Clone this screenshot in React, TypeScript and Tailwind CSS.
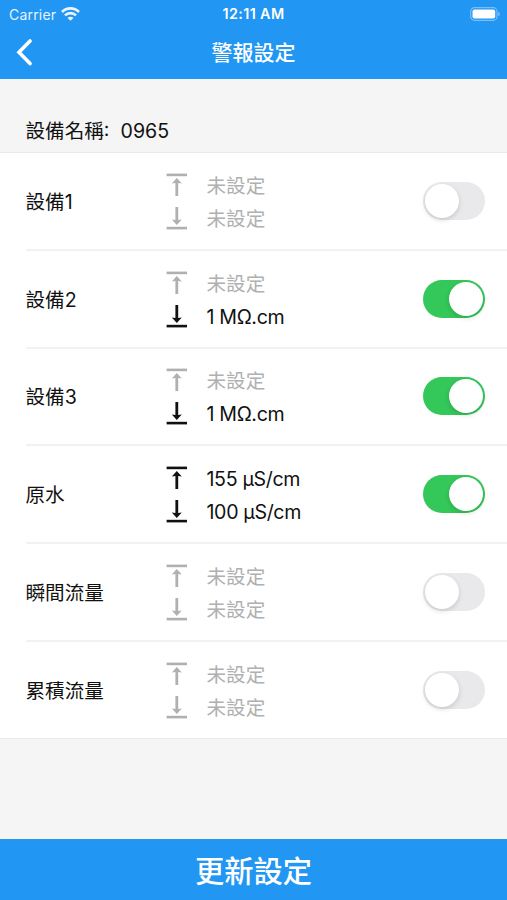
import React, { useState } from 'react';

type Channel = {
  name: string;
  high?: string;
  low?: string;
  enabled: boolean;
};

const initialChannels: Channel[] = [
  { name: '設備1', enabled: false },
  { name: '設備2', low: '1 MΩ.cm', enabled: true },
  { name: '設備3', low: '1 MΩ.cm', enabled: true },
  { name: '原水', high: '155 μS/cm', low: '100 μS/cm', enabled: true },
  { name: '瞬間流量', enabled: false },
  { name: '累積流量', enabled: false }
];

function LimitIcon({ low = false }: { low?: boolean }) {
  return (
    <svg viewBox="0 0 21 24" className="w-[21px] h-6 shrink-0" fill="currentColor">
      <g transform={low ? 'translate(0 24) scale(1 -1)' : undefined}>
        <rect x="0.6" y="0.6" width="20.4" height="2.6" />
        <path d="M10.8 5 L15.8 10.4 L12.2 9.9 V23 H9.4 V9.9 L5.8 10.4 Z" />
      </g>
    </svg>
  );
}

function Limit({ value, low = false }: { value?: string; low?: boolean }) {
  return (
    <div className={`flex h-[28.5px] gap-[19.5px] ${low ? 'items-end' : 'items-start'} ${value ? 'text-[#111111]' : 'text-[#b0b0b0]'}`}>
      <LimitIcon low={low} />
      <span className={`translate-y-px text-[19.6px] leading-[24px] whitespace-pre ${value ? 'tracking-[-0.35px]' : ''}`}>
        {value ?? '未設定'}
      </span>
    </div>
  );
}

function Toggle({ checked, onChange }: { checked: boolean; onChange: () => void }) {
  return (
    <button
      role="switch"
      aria-checked={checked}
      onClick={onChange}
      className={`flex w-[62.5px] h-[38px] items-center rounded-full p-[2px] ${checked ? 'justify-end bg-[#34c759]' : 'justify-start bg-[#e9e9eb]'}`}
    >
      <span className="w-[34px] h-[34px] rounded-full bg-white shadow-[0_2px_5px_rgba(0,0,0,0.15)]" />
    </button>
  );
}

function App() {
  const [channels, setChannels] = useState(initialChannels);

  const toggleChannel = (index: number) => {
    setChannels(prev => prev.map((c, i) => (i === index ? { ...c, enabled: !c.enabled } : c)));
  };

  return (
    <div className="flex h-[900px] w-[507px] flex-col overflow-hidden bg-[#f5f5f5] text-[#111111] font-['Inter','Noto_Sans_CJK_TC',sans-serif]">
      <header className="h-[79px] shrink-0 bg-[#2196f3] text-white">
        <div className="grid h-[27px] grid-cols-3 items-center pl-[9px] pr-[6px] text-[13.5px]">
          <div className="flex items-center gap-[5px] opacity-90">
            <span className="pt-px text-[14px] tracking-[0.2px]">Carrier</span>
            <svg viewBox="0 0 19 14" className="w-[19px] h-[14px]" fill="none" stroke="currentColor" strokeWidth="2.6">
              <path d="M1 5 C5.7 0.2 13.3 0.2 18 5" />
              <path d="M4 8.4 C7 5.3 12 5.3 15 8.4" />
              <path d="M9.5 13.8 L6.5 10.9 C8.2 9.5 10.8 9.5 12.5 10.9 Z" fill="currentColor" stroke="none" />
            </svg>
          </div>
          <span className="-ml-[3px] text-center font-semibold whitespace-nowrap pt-px text-[14.3px] tracking-[0.4px]">12:11 AM</span>
          <svg viewBox="0 0 31 14" className="ml-auto w-[31px] h-[14px]" fill="none">
            <rect x="0.7" y="0.7" width="26.3" height="12.6" rx="3.8" stroke="white" strokeOpacity="0.4" strokeWidth="1.2" />
            <rect x="2.5" y="2.5" width="22.7" height="9" rx="2" fill="white" />
            <path d="M28.4 4.8 C30.2 5.6 30.2 8.4 28.4 9.2 Z" fill="white" fillOpacity="0.5" />
          </svg>
        </div>
        <div className="grid h-[50px] grid-cols-3 items-center">
          <button aria-label="返回" className="pl-[16px]">
            <svg viewBox="0 0 18 28" className="w-[18px] h-7" fill="none" stroke="currentColor" strokeWidth="3.6" strokeLinecap="round">
              <path d="M14 3 L3 14.3 L14 25.6" />
            </svg>
          </button>
          <h1 className="text-center text-[21px] font-medium leading-none">警報設定</h1>
        </div>
      </header>

      <div className="flex h-[73px] shrink-0 items-end px-[25.5px] pb-[7px]">
        <p className="text-[19.6px] leading-[28px] whitespace-pre">設備名稱:  0965</p>
      </div>

      <main className="shrink-0 border-y border-[#ebebeb] bg-white">
        {channels.map((channel, index) => (
          <div key={channel.name} className="pl-[26px]">
            <div className={`flex items-center pr-[22px] ${index < channels.length - 1 ? 'h-[97.8px] border-b-2 border-[#f2f2f2]' : 'h-[96.5px]'}`}>
              <span className="-ml-[0.5px] w-[140.5px] pt-[3px] text-[19.6px]">{channel.name}</span>
              <div className="flex-1 pt-px">
                <Limit value={channel.high} />
                <Limit value={channel.low} low />
              </div>
              <Toggle checked={channel.enabled} onChange={() => toggleChannel(index)} />
            </div>
          </div>
        ))}
      </main>

      <button className="mt-auto h-[61px] shrink-0 bg-[#2196f3] pt-[4px] text-[29.3px] font-medium leading-none text-white">
        更新設定
      </button>
    </div>
  );
}

export default App;
